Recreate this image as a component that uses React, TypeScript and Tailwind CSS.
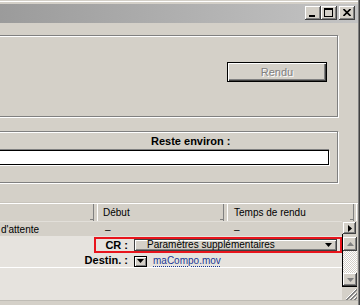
import React from "react";

const raised =
    "bg-[#d4d0c8] shadow-[inset_-1px_-1px_0_#404040,inset_1px_1px_0_#ffffff,inset_-2px_-2px_0_#808080]";
const etched =
    "border border-[#808080] shadow-[inset_1px_1px_0_#ffffff,1px_1px_0_#ffffff]";

function TitleButton({ children }: { children: React.ReactNode }) {
    return (
        <div className={`w-[16px] h-[14px] flex items-center justify-center ${raised}`}>
            {children}
        </div>
    );
}

function Arrow({ dir, color = "#000" }: { dir: "down" | "up" | "right"; color?: string }) {
    if (dir === "right")
        return (
            <svg width="4" height="7" viewBox="0 0 4 7">
                <path d="M0 0 L4 3.5 L0 7 Z" fill={color} />
            </svg>
        );
    return (
        <svg width="7" height="4" viewBox="0 0 7 4" className={dir === "up" ? "rotate-180" : ""}>
            <path d="M0 0 H7 L3.5 4 Z" fill={color} />
        </svg>
    );
}

export default function App() {
    return (
        <div className="w-[360px] h-[305px] overflow-hidden bg-[#d4d0c8] pr-[2px] shadow-[inset_-1px_0_0_#404040,inset_-2px_0_0_#808080] font-['Liberation_Sans',Arial,sans-serif] text-[10px] text-black flex flex-col">
            <div className="h-[1px] shrink-0" />
            <div className="h-[1px] bg-white shrink-0" />
            <div className="h-[2px] shrink-0" />

            {/* title bar */}
            <div className="h-[19px] shrink-0 bg-linear-to-r from-[#9b9b9b] to-[#c4c4c4] flex justify-end items-start pt-[2px] pr-[3px]">
                <TitleButton>
                    <div className="w-[6px] h-[2px] bg-black mt-[6px] -ml-[2px]" />
                </TitleButton>
                <TitleButton>
                    <div className="w-[9px] h-[9px] border border-black border-t-2 -ml-[1px] -mt-[1px]" />
                </TitleButton>
                <div className="w-[2px]" />
                <TitleButton>
                    <svg width="8" height="7" viewBox="0 0 8 7" className="-ml-[1px] -mt-[1px]">
                        <path d="M0.5 0 L7.5 7 M7.5 0 L0.5 7" stroke="#000" strokeWidth="1.6" />
                    </svg>
                </TitleButton>
            </div>

            {/* render group */}
            <div className={`mt-[12px] -ml-[4px] w-[342px] h-[82px] shrink-0 ${etched} flex justify-end items-start pt-[26px] pr-[10px]`}>
                <div className="w-[100px] h-[20px] border border-black bg-[#d4d0c8] shadow-[inset_1px_1px_0_#ffffff,inset_-1px_-1px_0_#404040,inset_-2px_-2px_0_#808080] flex items-center justify-center text-[11px] text-[#808080] [text-shadow:1px_1px_0_#ffffff]">
                    Rendu
                </div>
            </div>

            {/* progress group */}
            <div className={`mt-[14px] -ml-[4px] w-[342px] h-[52px] shrink-0 ${etched} pt-[3px]`}>
                <div className="pl-[154px] text-[11px] font-bold leading-[13px]">Reste environ :</div>
                <div className="mt-[2px] mr-[8px] h-[15px] bg-white border border-black shadow-[0_-1px_0_#808080,1px_1px_0_#ffffff]" />
            </div>

            {/* list header */}
            <div className="mt-[20px] h-[18px] shrink-0 flex border-t border-white shadow-[0_-1px_0_#c8c4bc]">
                <div className="relative w-[94px] border-r border-[#808080]">
                    <div className="absolute right-0 bottom-[1px] w-[3px] h-[1px] bg-[#808080]" />
                </div>
                <div className="w-[3px]" />
                <div className="relative w-[127px] border-l border-r border-l-white border-r-[#808080] pl-[5px] flex items-center">
                    Début
                    <div className="absolute right-0 bottom-[1px] w-[3px] h-[1px] bg-[#808080]" />
                </div>
                <div className="w-[3px]" />
                <div className="relative w-[127px] border-l border-r border-l-white border-r-[#808080] pl-[6px] flex items-center">
                    Temps de rendu
                    <div className="absolute right-0 bottom-[1px] w-[3px] h-[1px] bg-[#808080]" />
                </div>
                <div className="w-[2px]" />
                <div className="w-[1px] bg-white" />
            </div>

            {/* list body */}
            <div className="flex-1 flex">
                <div className="w-[342px] flex flex-col">
                    <div className="h-[15px] flex items-center pt-[1px] border-t border-[#e2dfd9]">
                        <span className="w-[97px] pl-[1px]">d'attente</span>
                        <span className="w-[130px] pl-[8px]">–</span>
                        <span className="pl-[7px]">–</span>
                    </div>
                    <div className="flex-1 bg-[#e6e3de] flex flex-col">
                        <div className="h-[18px] pt-[1px] pl-[94px]">
                            <div className="w-[248px] h-[16px] border-2 border-[#e8141c] flex items-center">
                                <span className="w-[32px] text-right text-[11px] font-bold leading-none">CR :</span>
                                <div className="ml-[6px] w-[203px] h-[12px] border border-[#404040] bg-[#d4d0c8] shadow-[inset_1px_1px_0_#ffffff,inset_-1px_-1px_0_#808080] flex items-center justify-between pl-[12px] pr-[4px] leading-none">
                                    <span>Paramètres supplémentaires</span>
                                    <Arrow dir="down" />
                                </div>
                            </div>
                        </div>
                        <div className="h-[13px] flex items-center">
                            <span className="w-[128px] text-right text-[11px] font-bold leading-none">Destin. :</span>
                            <div className="ml-[6px] w-[13px] h-[11px] border border-black bg-[#d4d0c8] shadow-[inset_1px_1px_0_#ffffff,inset_-1px_-1px_0_#808080] flex items-center justify-center mt-[1px]">
                                <Arrow dir="down" />
                            </div>
                            <span className="ml-[6px] text-[#1a3794] underline decoration-dotted underline-offset-2">maCompo.mov</span>
                        </div>
                        <div className="h-[1px] bg-white" />
                        <div className="flex-1" />
                    </div>
                </div>

                {/* scroller */}
                <div className="w-[16px] flex flex-col pt-[1px]">
                    <div className={`ml-[1px] w-[13px] h-[12px] flex items-center justify-center ${raised}`}>
                        <Arrow dir="right" />
                    </div>
                    <div className="w-[15px] h-[53px] border-l border-b border-black flex flex-col pt-[3px]">
                        <div className={`h-[14px] flex items-center justify-center ${raised}`}>
                            <Arrow dir="up" color="#808080" />
                        </div>
                        <div className="flex-1 bg-[repeating-conic-gradient(#ffffff_0%_25%,#d4d0c8_0%_50%)] bg-[length:2px_2px]" />
                        <div className={`h-[13px] flex items-center justify-center ${raised}`}>
                            <Arrow dir="down" color="#808080" />
                        </div>
                    </div>
                    <div className="mt-[1px] ml-[3px] w-[12px] h-[12px]">
                        <svg width="12" height="12" viewBox="0 0 12 12">
                            <path d="M11 1 L1 11 M11 5 L5 11 M11 9 L9 11" stroke="#ffffff" strokeWidth="1" />
                            <path d="M12 1 L1 12 M12 2 L2 12 M12 5 L5 12 M12 6 L6 12 M12 9 L9 12 M12 10 L10 12" stroke="#808080" strokeWidth="1" />
                        </svg>
                    </div>
                </div>
            </div>

            <div className="h-[5px] shrink-0 border-t border-[#bfbcb5]" />
        </div>
    );
}
